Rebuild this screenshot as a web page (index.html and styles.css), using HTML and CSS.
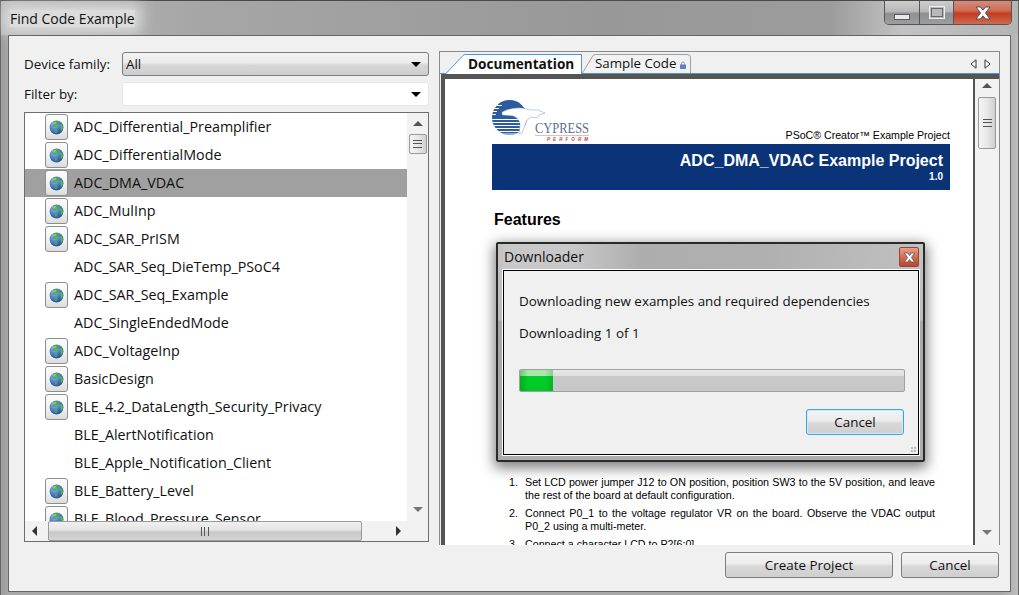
FILE: index.html
```html
<!DOCTYPE html>
<html lang="en">
<head>
<meta charset="utf-8">
<title>Find Code Example</title>
<link rel="stylesheet" href="styles.css">
</head>
<body>
<svg class="defs" width="0" height="0" aria-hidden="true">
  <defs>
    <radialGradient id="sea" cx="0.35" cy="0.3" r="0.8">
      <stop offset="0" stop-color="#8fb8ee"/>
      <stop offset="0.6" stop-color="#3d6fc4"/>
      <stop offset="1" stop-color="#274a8c"/>
    </radialGradient>
    <symbol id="globe" viewBox="0 0 16 16">
      <circle cx="8" cy="8" r="7.4" fill="url(#sea)"/>
      <path d="M5 1.6 9.6 1l1.4 1.8-1.3 2-2 .4-.4 1.9-2 .2-1.2-1.5L3 4.600z" fill="#4fa84a"/>
      <path d="M11.500 3.500 14.400 5.500 15 9l-1.500 2.500-1.300-.8.4-2.400-1.600-1.500z" fill="#56b04e"/>
      <path d="M6.500 9.500 9 10.500 8.600 13 7 14.200 6 12z" fill="#4fa84a"/>
      <ellipse cx="5.500" cy="3.500" rx="2.500" ry="1.500" fill="#fff" opacity=".3"/>
    </symbol>
    <symbol id="x" viewBox="0 0 20 14">
      <path d="M3 1h4.500L10 4.200 12.500 1H17l-4.500 6L17 13h-4.500L10 9.800 7.500 13H3l4.500-6z" fill="#fff" stroke="#4a5060" stroke-width="1"/>
    </symbol>
  </defs>
</svg>

<div class="window">
  <header class="titlebar">
    <span class="wintitle">Find Code Example</span>
    <div class="winbtns">
      <div class="wb wb-min"><span class="glyph-min"></span></div>
      <div class="wb wb-max"><span class="glyph-max"></span></div>
      <div class="wb wb-close"><svg width="20" height="14"><use href="#x"/></svg></div>
    </div>
  </header>

  <main class="client">
    <div class="panels">
      <section class="left">
        <div class="field">
          <label class="lbl">Device family:</label>
          <div class="combo combo-ro"><span>All</span><i class="caret"></i></div>
        </div>
        <div class="field">
          <label class="lbl">Filter by:</label>
          <div class="combo combo-edit"><i class="caret"></i></div>
        </div>
        <div class="listbox">
          <div class="rows">
            <div class="row"><span class="ico"><svg width="15" height="15"><use href="#globe"/></svg></span>ADC_Differential_Preamplifier</div>
            <div class="row"><span class="ico"><svg width="15" height="15"><use href="#globe"/></svg></span>ADC_DifferentialMode</div>
            <div class="row sel"><span class="ico"><svg width="15" height="15"><use href="#globe"/></svg></span>ADC_DMA_VDAC</div>
            <div class="row"><span class="ico"><svg width="15" height="15"><use href="#globe"/></svg></span>ADC_MulInp</div>
            <div class="row"><span class="ico"><svg width="15" height="15"><use href="#globe"/></svg></span>ADC_SAR_PrISM</div>
            <div class="row"><span class="noico"></span>ADC_SAR_Seq_DieTemp_PSoC4</div>
            <div class="row"><span class="ico"><svg width="15" height="15"><use href="#globe"/></svg></span>ADC_SAR_Seq_Example</div>
            <div class="row"><span class="noico"></span>ADC_SingleEndedMode</div>
            <div class="row"><span class="ico"><svg width="15" height="15"><use href="#globe"/></svg></span>ADC_VoltageInp</div>
            <div class="row"><span class="ico"><svg width="15" height="15"><use href="#globe"/></svg></span>BasicDesign</div>
            <div class="row"><span class="ico"><svg width="15" height="15"><use href="#globe"/></svg></span>BLE_4.2_DataLength_Security_Privacy</div>
            <div class="row"><span class="noico"></span>BLE_AlertNotification</div>
            <div class="row"><span class="noico"></span>BLE_Apple_Notification_Client</div>
            <div class="row"><span class="ico"><svg width="15" height="15"><use href="#globe"/></svg></span>BLE_Battery_Level</div>
            <div class="row"><span class="ico"><svg width="15" height="15"><use href="#globe"/></svg></span>BLE_Blood_Pressure_Sensor</div>
          </div>
          <div class="vbar list-vbar">
            <i class="arr arr-up"></i>
            <div class="vthumb list-vthumb"><span class="grip-h"></span></div>
            <div class="vfill"></div>
            <i class="arr arr-down"></i>
          </div>
          <div class="hbar">
            <i class="arr arr-left"></i>
            <div class="hthumb"><span class="grip-v"></span></div>
            <i class="arr arr-right"></i>
          </div>
          <div class="corner"></div>
        </div>
      </section>

      <section class="right">
        <div class="tabstrip">
          <div class="tab tab-active">
            <svg class="tabshape" width="137" height="20"><path d="M0.500 20 18 1.500Q19 .5 21 .5H136.500V20" fill="#fff" stroke="#4a94e0"/></svg>
            <span class="tabtext">Documentation</span>
          </div>
          <div class="tab tab-idle">
            <svg class="tabshape" width="109" height="20"><path d="M0.500 19 11 1.500Q12 .5 14 .5H105Q108.500 .5 108.500 3V19" fill="#f2f2f2" stroke="#a0a0a0"/></svg>
            <span class="tabtext">Sample Code</span>
            <svg class="lock" width="6" height="8" viewBox="0 0 6 8"><path d="M1.500 4V2.500a1.500 1.500 0 0 1 3 0V4" fill="none" stroke="#8a9ac8"/><rect y="3.500" width="6" height="4.500" fill="#5f7fd0"/></svg>
          </div>
          <div class="tabnav">
            <svg width="7" height="10" viewBox="0 0 7 10"><path d="M6 .8V9.200L1 5z" fill="#fff" stroke="#333"/></svg>
            <svg width="7" height="10" viewBox="0 0 7 10"><path d="M1 .8V9.200L6 5z" fill="#fff" stroke="#333"/></svg>
          </div>
        </div>
        <div class="docframe">
          <article class="doc">
            <div class="dochead">
              <svg class="logo" width="100" height="42" viewBox="0 0 100 42">
                <defs>
                  <clipPath id="ball"><circle cx="18.500" cy="17.500" r="17.500"/></clipPath>
                </defs>
                <g clip-path="url(#ball)">
                  <rect width="38" height="36" fill="#2c5c9c"/>
                  <path d="M0 19.500h38M0 22.500h38M0 25.500h38M0 28.500h38M0 31.500h38M0 34h38M0 5.500h11M0 8.500h8M0 11.500h6M0 14.500h5" stroke="#fff" stroke-width="1.100"/>
                </g>
                <path d="M11 12Q20 7 31 8L40 10 47 10 54 13 48 15 46 18 40 17 36 20 31 33 28 34 29 24Q28 18 22 16L11 15Z" fill="#fff" stroke="#5b7fae" stroke-width=".4"/>
                <text class="logo-cy" x="44" y="33" textLength="54" lengthAdjust="spacingAndGlyphs">CYPRESS</text>
                <rect x="44" y="35" width="54" height=".7" fill="#d9a0a0"/>
                <text class="logo-pf" x="56" y="41" textLength="41">PERFORM</text>
              </svg>
              <span class="docsub">PSoC® Creator™ Example Project</span>
            </div>
            <div class="banner">
              <div class="banner-t">ADC_DMA_VDAC Example Project</div>
              <div class="banner-v">1.0</div>
            </div>
            <h2 class="doch">Features</h2>
            <div class="docgap"></div>
            <ol class="steps">
              <li><span>Set LCD power jumper J12 to ON position, position SW3 to the 5V position, and leave the rest of the board at default configuration.</span></li>
              <li><span>Connect P0_1 to the voltage regulator VR on the board. Observe the VDAC output P0_2 using a multi-meter.</span></li>
              <li><span>Connect a character LCD to P2[6:0].</span></li>
            </ol>
          </article>
          <div class="vbar doc-vbar">
            <i class="arr arr-up"></i>
            <div class="vthumb doc-vthumb"><span class="grip-h"></span></div>
            <div class="vfill"></div>
            <i class="arr arr-down"></i>
          </div>
        </div>
      </section>
    </div>

    <footer class="actions">
      <button class="btn btn-create">Create Project</button>
      <button class="btn btn-cancel">Cancel</button>
    </footer>
  </main>
</div>

<div class="dialog">
  <div class="dlgbar">
    <span class="dlgtitle">Downloader</span>
    <div class="dlgclose"><svg width="15" height="11"><use href="#x"/></svg></div>
  </div>
  <div class="dlgbody">
    <p class="dlgline">Downloading new examples and required dependencies</p>
    <p class="dlgline dlgline2">Downloading 1 of 1</p>
    <div class="progress"><div class="progress-fill"></div></div>
    <div class="dlgactions"><button class="btn btn-focus">Cancel</button></div>
    <span class="sizegrip"></span>
  </div>
</div>
</body>
</html>
```

FILE: styles.css
```css
* { box-sizing: border-box; }
html, body { margin: 0; height: 100%; }
body {
  width: 1019px;
  height: 595px;
  overflow: hidden;
  position: relative;
  font-family: "Open Sans", "Noto Sans", sans-serif;
  font-size: 13.400px;
  color: #111;
  background: #a8a8a8;
}
.defs { position: absolute; }

.window {
  height: 595px;
  display: flex;
  flex-direction: column;
  border-top: 1px solid #4a4a4a;
  border-left: 1px solid #666;
  border-right: 1px solid #666;
  background: linear-gradient(90deg, #9c9c9c 0, #a8a8a8 8px, #a8a8a8 1000px, #bdbdbd 100%);
}

.titlebar {
  height: 34px;
  flex: none;
  display: flex;
  align-items: flex-start;
  justify-content: space-between;
  padding-right: 6px;
  background: linear-gradient(90deg, #b8b8b8 0, #a6a6a6 200px, #989898 600px, #9c9c9c 830px, #c2c2c2 900px, #b4b4b4 100%);
}
.wintitle {
  margin: 9px 0 0 9px;
  font-size: 14px;
  line-height: 17px;
  color: #111;
  background: #dcdcdc;
  box-shadow: 0 0 14px 6px #dcdcdc;
}
.winbtns {
  display: flex;
  height: 24px;
  border: 1px solid #555;
  border-top: 0;
  border-radius: 0 0 5px 5px;
  overflow: hidden;
}
.wb {
  display: flex;
  align-items: center;
  justify-content: center;
  height: 23px;
}
.wb-min, .wb-max {
  background: linear-gradient(#cdcdcd 0, #b8b8b8 45%, #8f9092 55%, #9c9d9f 100%);
  border-right: 1px solid #555;
}
.wb-min { width: 35px; padding-top: 8px; }
.wb-max { width: 33px; border-right: 0; }
.wb-close {
  width: 58px;
  border-left: 1px solid #555;
  background: linear-gradient(#d9897a 0, #cf6f58 40%, #c33c22 55%, #cf6a50 100%);
}
.glyph-min {
  width: 16px;
  height: 6px;
  background: #e8e8e8;
  border: 1px solid #5a5a60;
}
.glyph-max {
  width: 16px;
  height: 13px;
  border: 1px solid #eee;
  outline: 1px solid #666;
  outline-offset: -3px;
  background: #b8b8ba;
}

.client {
  flex: none;
  height: 557px;
  margin: 0 7px 0 7px;
  padding: 15px 11px 0 15px;
  background: #f0f0f0;
  border: 1px solid #666;
  display: flex;
  flex-direction: column;
}
.panels { display: flex; gap: 10px; height: 494px; flex: none; }

.left { width: 405px; flex: none; padding-top: 1px; display: flex; flex-direction: column; gap: 6px; }
.field { display: flex; align-items: center; height: 24px; }
.lbl { width: 98px; flex: none; font-size: 13.400px; }
.combo {
  flex: 1;
  height: 24px;
  display: flex;
  align-items: center;
  justify-content: space-between;
  padding: 0 7px 0 3px;
  border-radius: 3px;
  font-size: 13.400px;
}
.combo-ro { border: 1px solid #7d7d7d; background: linear-gradient(#f2f2f2 0, #ebebeb 45%, #d6d6d6 55%, #cfcfcf 100%); }
.combo-edit { background: #fff; border: 1px solid #e6e6e6; justify-content: flex-end; }
.caret { width: 0; height: 0; border: 5px solid transparent; border-top: 5px solid #000; border-bottom: 0; border-left-width: 5px; }

.listbox {
  height: 430px;
  border: 1px solid #6e6e6e;
  background: #fff;
  display: grid;
  grid-template-columns: 382px 21px;
  grid-template-rows: 408px 20px;
  overflow: hidden;
}
.rows { overflow: hidden; }
.row {
  height: 28px;
  padding-bottom: 2px;
  display: flex;
  align-items: center;
  font-size: 14.300px;
  color: #111;
  white-space: nowrap;
}
.sel { background: #a0a0a0; }
.ico {
  width: 23px;
  height: 26px;
  margin: 2px 6px 0 20px;
  border: 1px solid #8e8e8e;
  border-radius: 3px;
  background: linear-gradient(#fbfbfb, #f2f2f2 55%, #dcdcdc);
  display: flex;
  align-items: center;
  justify-content: center;
  flex: none;
}
.noico { width: 49px; flex: none; }

.vbar {
  display: flex;
  flex-direction: column;
  align-items: center;
  background: #f2f2f2;
}
.vfill { flex: 1; }
.arr { width: 0; height: 0; border: 5px solid transparent; flex: none; }
.arr-up { border-top: 0; border-bottom: 5px solid #555; margin-top: 8px; }
.arr-down { border-bottom: 0; border-top: 5px solid #777; margin-bottom: 9px; }
.arr-left { border-left: 0; border-right: 5px solid #333; margin: 0 11px 0 7px; }
.arr-right { border-right: 0; border-left: 5px solid #333; margin: 0 0 0 auto; }
.vthumb {
  width: 18px;
  border: 1px solid #9a9a9a;
  border-radius: 2px;
  background: linear-gradient(90deg, #f4f4f4, #e8e8e8 50%, #d0d0d0);
  display: flex;
  align-items: center;
  justify-content: center;
}
.list-vthumb { height: 20px; margin-top: 8px; }
.doc-vbar .arr-up { margin-top: 4px; }
.doc-vbar .arr-down { margin-bottom: 10px; }
.doc-vthumb { height: 52px; margin-top: 9px; }
.grip-h { width: 9px; height: 8px; border-top: 1px solid #555; border-bottom: 1px solid #555; position: relative; }
.grip-h::after { content: ""; display: block; height: 1px; margin-top: 2px; background: #555; }
.hbar {
  display: flex;
  align-items: center;
  background: #f2f2f2;
  padding-right: 6px;
}
.hthumb {
  width: 314px;
  height: 20px;
  border: 1px solid #9a9a9a;
  border-radius: 2px;
  background: linear-gradient(#f0f0f0, #e4e4e4 45%, #c8c8c8 55%, #d4d4d4);
  display: flex;
  align-items: center;
  justify-content: center;
}
.grip-v { width: 8px; height: 9px; border-left: 1px solid #555; border-right: 1px solid #555; }
.grip-v::after { content: ""; display: block; width: 1px; height: 9px; margin-left: 2px; background: #555; }
.corner { background: #f2f2f2; }

.right {
  width: 561px;
  flex: none;
  border: 1px solid #8a8a8a;
  border-bottom: 0;
  display: flex;
  flex-direction: column;
}
.tabstrip {
  height: 22px;
  flex: none;
  display: flex;
  align-items: flex-end;
  padding-left: 5px;
  border-bottom: 1px solid #4a94e0;
  position: relative;
}
.tab { position: relative; height: 19px; flex: none; display: flex; align-items: center; }
.tabshape { position: absolute; left: 0; top: 0; }
.tabtext { position: relative; white-space: nowrap; line-height: 17px; }
.tab-active { width: 137px; padding-left: 23px; font-weight: 700; font-size: 13.600px; color: #111; }
.tab-idle { width: 109px; padding-left: 13px; font-size: 13.300px; }
.lock { position: relative; margin-left: 4px; margin-top: 3px; }
.tabnav { margin-left: auto; height: 19px; display: flex; align-items: center; gap: 7px; padding: 0 8px 0 0; }

.docframe {
  flex: 1;
  min-height: 0;
  margin-left: 1px;
  display: flex;
  border-top: 5px solid #555;
}
.doc {
  width: 534px;
  flex: none;
  overflow: hidden;
  background: #fff;
  border-left: 4px solid #555;
  border-right: 2px solid #555;
  padding: 20px 23px 0 47px;
  font-family: "Liberation Sans", Arial, sans-serif;
  color: #000;
}
.dochead { height: 45px; display: flex; justify-content: space-between; align-items: flex-end; }
.logo { display: block; margin: 0 0 2px -1px; flex: none; }
.logo-cy { font-family: "Liberation Serif", serif; font-size: 14px; fill: #5b6f8f; }
.logo-pf { font-family: "Liberation Sans", sans-serif; font-size: 4.500px; font-style: italic; font-weight: 700; fill: #b84040; }
.docsub { font-size: 10.600px; line-height: 13px; padding-bottom: 2px; white-space: nowrap; }
.banner { height: 46px; background: #0b3478; color: #fff; text-align: right; padding: 7px 7px 0 0; font-weight: 700; }
.banner-t { font-size: 16px; line-height: 19px; white-space: nowrap; }
.banner-v { font-size: 10px; line-height: 12px; margin-top: 1px; }
.doch { margin: 20px 0 0 2px; font-size: 16px; line-height: 20px; font-weight: 700; }
.docgap { height: 246px; }
.steps { margin: 0; padding: 0 15px 0 17px; font-size: 10.700px; line-height: 13px; list-style: none; counter-reset: step; }
.steps li { margin-bottom: 5px; display: flex; counter-increment: step; }
.steps li::before { content: counter(step) "."; width: 16px; flex: none; }
.steps li span { flex: 1; text-align: justify; }

.doc-vbar { width: 24px; flex: none; }

.actions {
  display: flex;
  justify-content: flex-end;
  gap: 8px;
  margin-top: 7px;
}
.btn {
  height: 26px;
  border: 1px solid #7d7d7d;
  border-radius: 3px;
  background: linear-gradient(#f4f4f4 0, #ebebeb 45%, #d8d8d8 55%, #cfcfcf 100%);
  font-family: "Open Sans", "Noto Sans", sans-serif;
  font-size: 13.400px;
  color: #111;
  padding: 0;
}
.btn-create { width: 168px; }
.btn-cancel { width: 98px; }

.dialog {
  position: absolute;
  left: 496px;
  top: 242px;
  width: 429px;
  height: 220px;
  border: 2px solid #2a2a2a;
  border-radius: 2px;
  background: linear-gradient(#c4c4c4 0, #bcbcbc 35%, #a8a8a8 36%, #acacac 100%);
  box-shadow: 0 4px 13px 2px rgba(0, 0, 0, .5);
  padding: 0 4px 5px 5px;
  display: flex;
  flex-direction: column;
}
.dlgbar {
  height: 26px;
  flex: none;
  display: flex;
  justify-content: space-between;
  align-items: flex-start;
  background: linear-gradient(90deg, #c8c8c8 0, #c8c8c8 70px, #adadad 140px, #b0b0b0 260px, #c0c0c0 100%);
}
.dlgtitle { margin: 3px 0 0 1px; font-size: 14px; line-height: 19px; }
.dlgclose {
  width: 20px;
  height: 20px;
  margin: 3px 0 0;
  border: 1px solid #8c4a3a;
  border-radius: 2px;
  background: linear-gradient(#e8a08c, #d96a50 50%, #c0452c);
  display: flex;
  align-items: center;
  justify-content: center;
}
.dlgbody {
  flex: 1;
  position: relative;
  background: #f0f0f0;
  border: 1px solid #000;
  outline: 1px solid #fff;
  padding: 21px 13px 0 15px;
}
.dlgline { margin: 0; font-size: 13.400px; line-height: 18px; white-space: nowrap; }
.dlgline2 { margin-top: 14px; }
.progress {
  margin-top: 27px;
  height: 23px;
  border: 1px solid #a0a0a0;
  border-radius: 2px;
  background: linear-gradient(#e6e6e6 0, #e0e0e0 28%, #c8c8c8 29%, #c8c8c8 100%);
  overflow: hidden;
}
.progress-fill {
  width: 33px;
  height: 100%;
  background:
    linear-gradient(90deg, rgba(0, 100, 20, .3), rgba(0, 0, 0, 0) 25%, rgba(0, 0, 0, 0) 75%, rgba(0, 100, 20, .2)),
    linear-gradient(#a8e8a8 0, #a8e8a8 28%, #00d028 29%, #00c828 100%);
}
.dlgactions { display: flex; justify-content: flex-end; margin-top: 17px; padding-right: 1px; }
.btn-focus { width: 98px; border-color: #3fa6d8; box-shadow: inset 0 0 0 1px #c8ecf8; }
.sizegrip {
  position: absolute;
  right: 1px;
  bottom: 1px;
  width: 6px;
  height: 6px;
  background: radial-gradient(circle at 1px 1px, #bbb 1px, transparent 1.2px) 0 0 / 3px 3px;
}
```
